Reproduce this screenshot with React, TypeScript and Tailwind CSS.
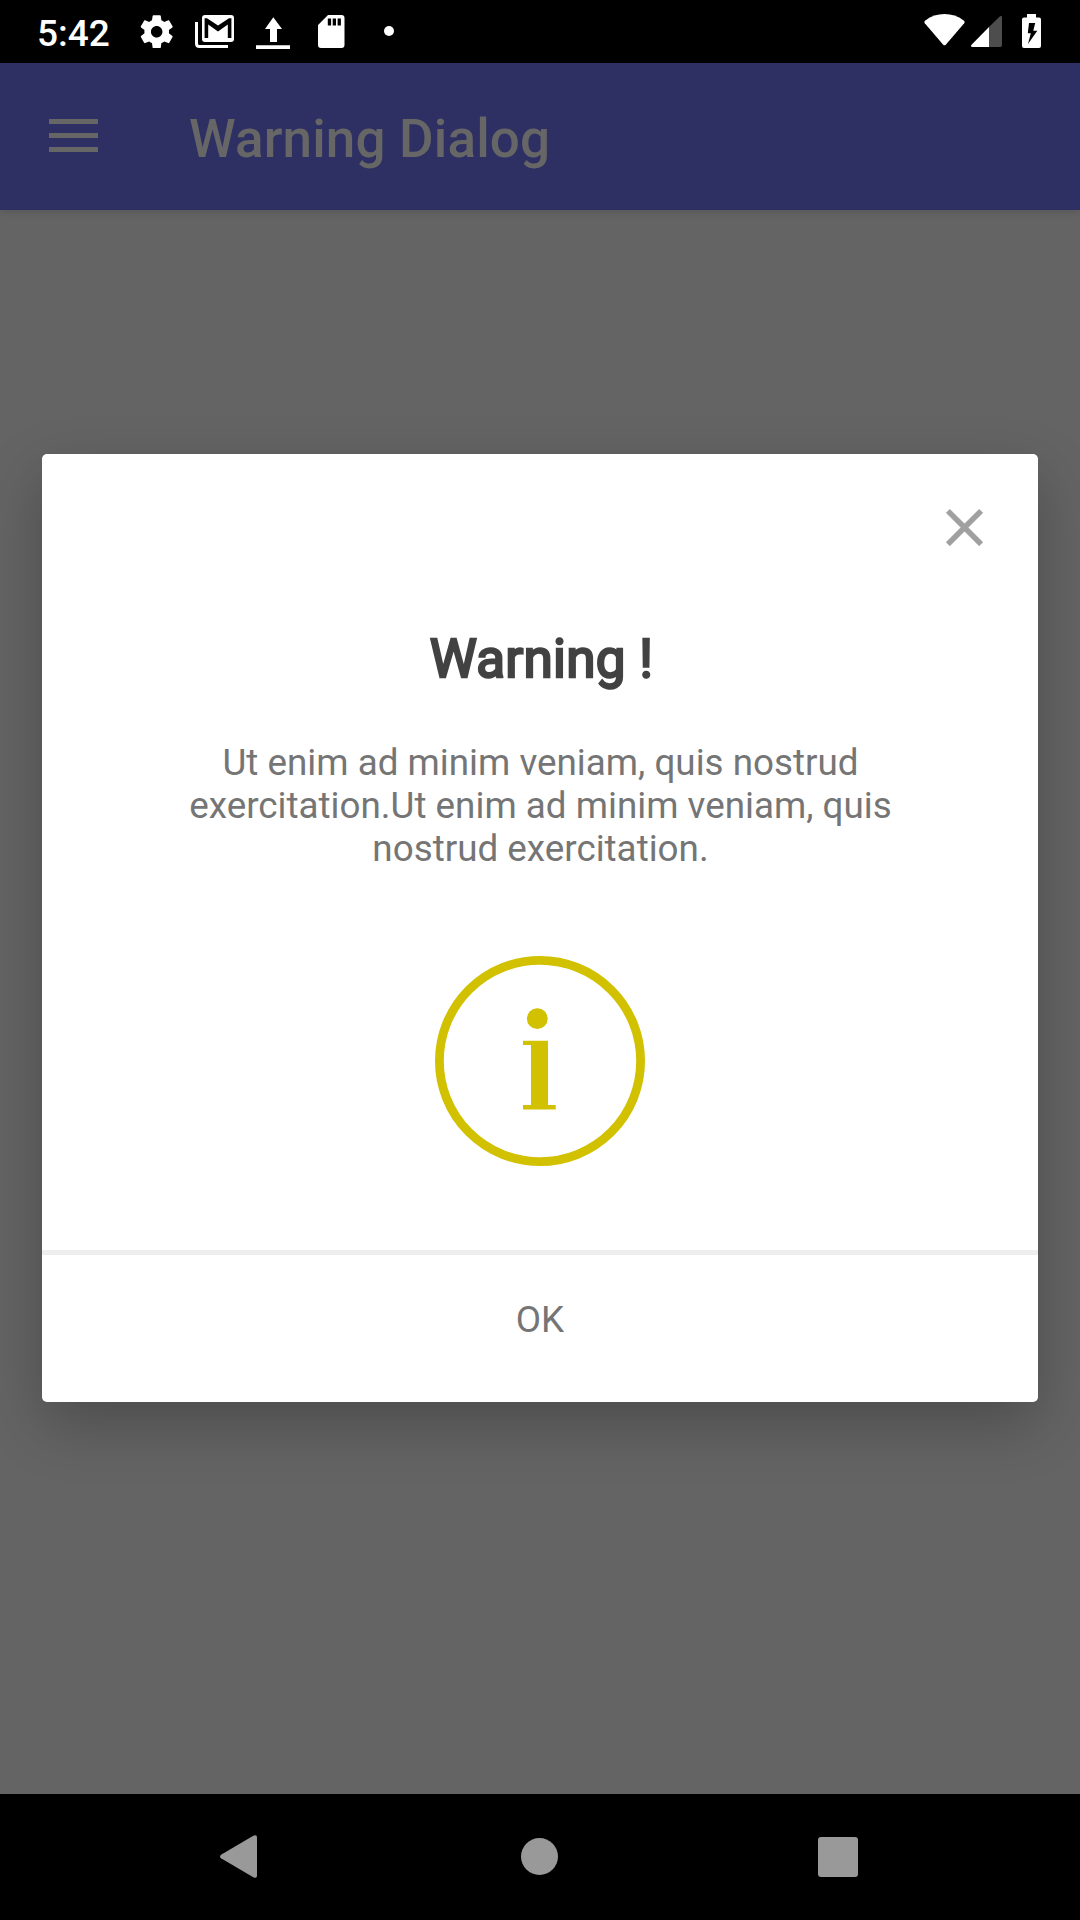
import React from "react";

function StatusBar() {
  return (
    <header className="flex h-[63px] shrink-0 items-start bg-black text-white">
      <span className="ml-[37px] mt-[12px] w-[100px] text-[37px] leading-[43px] font-medium">5:42</span>
      <svg className="mt-[12px] h-[39.4px] w-[39.4px]" viewBox="0 0 24 24" fill="currentColor" aria-hidden="true">
        <path d="M19.43 12.98c.04-.32.07-.64.07-.98s-.03-.66-.07-.98l2.11-1.65c.19-.15.24-.42.12-.64l-2-3.46c-.12-.22-.39-.3-.61-.22l-2.49 1c-.52-.4-1.08-.73-1.69-.98l-.38-2.65C14.46 2.18 14.25 2 14 2h-4c-.25 0-.46.18-.49.42l-.38 2.65c-.61.25-1.17.59-1.69.98l-2.49-1c-.23-.09-.49 0-.61.22l-2 3.46c-.13.22-.07.49.12.64l2.11 1.65c-.04.32-.07.65-.07.98s.03.66.07.98l-2.11 1.65c-.19.15-.24.42-.12.64l2 3.46c.12.22.39.3.61.22l2.49-1c.52.4 1.08.73 1.69.98l.38 2.65c.03.24.24.42.49.42h4c.25 0 .46-.18.49-.42l.38-2.65c.61-.25 1.17-.59 1.69-.98l2.49 1c.23.09.49 0 .61-.22l2-3.46c.12-.22.07-.49-.12-.64l-2.11-1.65zM12 15.5c-1.93 0-3.5-1.57-3.5-3.5s1.57-3.5 3.5-3.5 3.5 1.57 3.5 3.5-1.57 3.5-3.5 3.5z" />
      </svg>
      <svg className="ml-[18.6px] mt-[15px] h-[33px] w-[39px]" viewBox="0 0 39 33" aria-hidden="true">
        <path d="M1.5 7v21.5q0 3 3 3H33" fill="none" stroke="currentColor" strokeWidth="3" />
        <path fillRule="evenodd" fill="currentColor" d="M10 0h26q3 0 3 3v21q0 3-3 3H10q-3 0-3-3V3q0-3 3-3zM9.6 3.2V23h3.6V9.6L23 16.5l9.8-6.9V23h3.6V3.2H34L23 10.5 12 3.2z" />
      </svg>
      <svg className="ml-[22px] mt-[17px] h-[32px] w-[34px]" viewBox="0 0 34 32" fill="currentColor" aria-hidden="true">
        <path d="M17.3 .3 26 12h-5v13h-7V12H9zM0 28.2h34V32H0z" />
      </svg>
      <svg className="ml-[28px] mt-[15px] h-[33px] w-[27px]" viewBox="0 0 27 33" fill="currentColor" aria-hidden="true">
        <path fillRule="evenodd" d="M10 0h13.5q3 0 3 3v27q0 3-3 3H3q-3 0-3-3V10zM9.8 3.4v7h3.3v-7zm4.9 0v7H18v-7zm4.9 0v7h3.3v-7z" />
      </svg>
      <span className="ml-[39px] mt-[26px] size-[10px] rounded-full bg-white" />
      <svg className="ml-auto mt-[14px] h-[32px] w-[41px]" viewBox="0 0 41 32" fill="currentColor" aria-hidden="true">
        <path d="M.8 9.2Q-.3 7.6 1.3 6.4 10 0 20.5 0T39.7 6.4q1.6 1.2.5 2.8L22 30.5q-1.5 1.7-3 0z" />
      </svg>
      <svg className="ml-[6px] mt-[16px] h-[31px] w-[31px]" viewBox="0 0 31 31" fill="currentColor" aria-hidden="true">
        <path d="M18 11v20H1.5Q-.5 31 .3 29z" />
        <path opacity=".3" d="M18 11 28.7.5Q31-1 31 1.5V29q0 2-2 2H18z" />
      </svg>
      <svg className="ml-[20px] mr-[39px] mt-[14px] h-[34px] w-[19px]" viewBox="0 0 19 34" fill="currentColor" aria-hidden="true">
        <path fillRule="evenodd" d="M5 0h9v3.4h3q2 0 2 2V32q0 2-2 2H2q-2 0-2-2V5.4q0-2 2-2h3zM7 9 5.8 19.2h3L6 30l9.3-13.2h-4L13.2 9z" />
      </svg>
    </header>
  );
}

function AppBar() {
  return (
    <div className="flex h-[147px] shrink-0 bg-[#2e3063] text-[#666666] shadow-[0_2px_8px_rgba(0,0,0,0.14)]">
      <div className="ml-[49px] mt-[56px] flex w-[49px] flex-col gap-[9px]">
        <span className="h-[5px] bg-[#666666]" />
        <span className="h-[5px] bg-[#666666]" />
        <span className="h-[5px] bg-[#666666]" />
      </div>
      <h1 className="ml-[91px] mt-[45px] text-[53px] leading-[62px] font-medium tracking-[0.15px]">Warning Dialog</h1>
    </div>
  );
}

function WarningDialog() {
  return (
    <section
      role="dialog"
      aria-label="Warning"
      className="mx-[42px] mt-[244px] flex h-[948px] flex-col items-center rounded-[5px] bg-white text-[36.8px] leading-[43px] text-[#757575] shadow-[0_22px_60px_rgba(0,0,0,0.24)]"
    >
      <button className="mr-[42px] mt-[41.5px] self-end text-[#a0a0a0]" aria-label="Close">
        <svg className="size-[63px]" viewBox="0 0 24 24" fill="currentColor" stroke="currentColor" strokeWidth="0.16">
          <path d="M19 6.41 17.59 5 12 10.59 6.41 5 5 6.41 10.59 12 5 17.59 6.41 19 12 13.41 17.59 19 19 17.59 13.41 12z" />
        </svg>
      </button>
      <h2 className="mt-[69.5px] pl-[3px] text-[53px] leading-[62px] tracking-[0.3px] text-[#424242] [-webkit-text-stroke:2.4px_#424242]">Warning !</h2>
      <p className="mt-[51px] w-[730px] pl-px text-center">
        Ut enim ad minim veniam, quis nostrud exercitation.Ut enim ad minim veniam, quis nostrud exercitation.
      </p>
      <svg className="mt-[86px] size-[210px] shrink-0" viewBox="0 0 210 210" fill="#d1c100" aria-hidden="true">
        <circle cx="105" cy="105" r="100.6" fill="none" stroke="#d1c100" strokeWidth="8.8" />
        <circle cx="102.3" cy="62.7" r="10.4" />
        <path d="M88 84.7h25V149h7.7v4.5H88V149h8V89h-8z" />
      </svg>
      <button className="mt-[84px] flex w-full grow justify-center border-t-[5px] border-[#eeeeee] pt-[43px] leading-[43px]">OK</button>
    </section>
  );
}

function NavigationBar() {
  return (
    <nav className="mt-auto flex h-[126px] shrink-0 items-center bg-black text-[#999999]">
      <svg className="ml-[220px] -mt-px h-[43px] w-[37px]" viewBox="0 0 37 43" fill="currentColor" aria-hidden="true">
        <path d="M1 23.3q-2-1.8 0-3.6L33.3.8Q37-1 37 2.5v38q0 3.5-3.7 1.7z" />
      </svg>
      <span className="-mt-px ml-[264px] size-[37px] rounded-full bg-[#999999]" />
      <span className="ml-[260px] size-[40px] rounded-[3px] bg-[#999999]" />
    </nav>
  );
}

export default function App() {
  return (
    <div className="flex h-[1920px] w-[1080px] flex-col overflow-hidden bg-[#646464] font-[Roboto,sans-serif]">
      <StatusBar />
      <AppBar />
      <WarningDialog />
      <NavigationBar />
    </div>
  );
}
